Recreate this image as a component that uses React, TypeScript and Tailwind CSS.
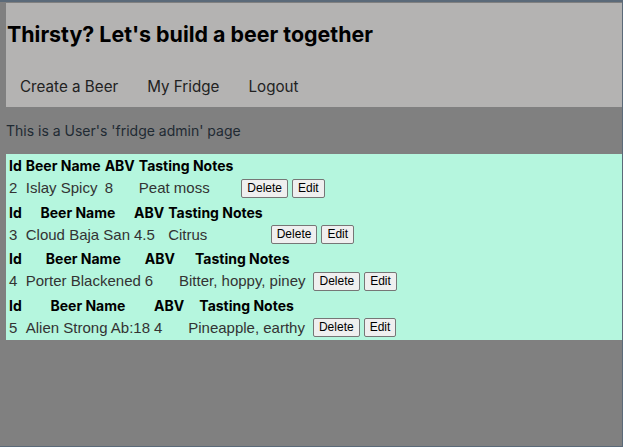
import React from 'react';

type Beer = {
    id: number;
    name: string;
    abv: string;
    notes: string;
}

const beers: Beer[] = [
    { id: 2, name: 'Islay Spicy', abv: '8', notes: 'Peat moss' },
    { id: 3, name: 'Cloud Baja San', abv: '4.5', notes: 'Citrus' },
    { id: 4, name: 'Porter Blackened', abv: '6', notes: 'Bitter, hoppy, piney' },
    { id: 5, name: 'Alien Strong Ab:18', abv: '4', notes: 'Pineapple, earthy' },
]

const BeerRow: React.FC<{ beer: Beer }> = ({ beer }) => {
    return (
        <table className="border-separate border-spacing-[2px]">
            <thead>
                <tr className="font-['Inter',sans-serif] font-bold text-[14px] leading-[17.5px] text-black">
                    <th className="p-px">Id</th>
                    <th className="p-px">Beer Name</th>
                    <th className="p-px">ABV</th>
                    <th className="p-px">Tasting Notes</th>
                </tr>
            </thead>
            <tbody>
                <tr className="font-['Liberation_Sans',Arial,sans-serif] text-[15px] leading-[18px] text-[#333]">
                    <td className="p-px">{beer.id}</td>
                    <td className="p-px">{beer.name}</td>
                    <td className="p-px">{beer.abv}</td>
                    <td className="p-px">{beer.notes}</td>
                    <td className="p-px">
                        <div className="flex gap-1 ml-[4px]">
                            <button className="bg-[#efefef] border border-[#767676] rounded-[2px] px-[5px] py-px text-[12px] leading-[15px] text-black">
                                Delete
                            </button>
                            <button className="bg-[#efefef] border border-[#767676] rounded-[2px] px-[5px] py-px text-[12px] leading-[15px] text-black">
                                Edit
                            </button>
                        </div>
                    </td>
                </tr>
            </tbody>
        </table>
    )
}

const App: React.FC = () => {
    return (
        <div className="w-[623px] h-[447px] bg-[#808080] border-t-2 border-r border-b border-[#5b6a79] font-['Inter',sans-serif] overflow-hidden">
            <div className="pl-[6px] pt-px">
                <div className="bg-[#b4b3b2] h-[104px]">
                    <h1 className="text-[21.4px] leading-[28px] font-bold text-black pt-[17px] pl-px">
                        Thirsty? Let's build a beer together
                    </h1>
                    <nav className="flex gap-[29px] pl-[14px] pt-[29px] text-[15.2px] leading-[20px] text-[#222]">
                        <span>Create a Beer</span>
                        <span>My Fridge</span>
                        <span>Logout</span>
                    </nav>
                </div>
                <p className="text-[14px] leading-[18px] text-[#1f2a33] pt-[15px] pb-[14px]">
                    This is a User's 'fridge admin' page
                </p>
                <div className="bg-[#b5f6de]">
                    {beers.map(beer => <BeerRow key={beer.id} beer={beer} />)}
                </div>
            </div>
        </div>
    );
};

export default App;
